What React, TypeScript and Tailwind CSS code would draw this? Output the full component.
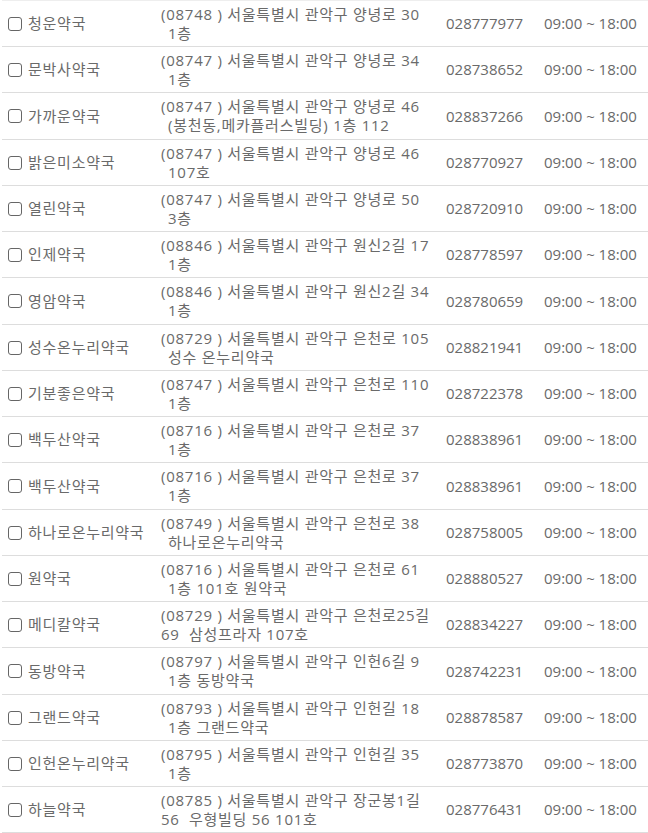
const ROWS: { name: string; addr: string; addr2: string; indent: boolean; tel: string }[] = [
  { name: "청운약국", addr: "(08748 ) 서울특별시 관악구 양녕로 30", addr2: "1층", indent: true, tel: "028777977" },
  { name: "문박사약국", addr: "(08747 ) 서울특별시 관악구 양녕로 34", addr2: "1층", indent: true, tel: "028738652" },
  { name: "가까운약국", addr: "(08747 ) 서울특별시 관악구 양녕로 46", addr2: "(봉천동,메카플러스빌딩) 1층 112", indent: true, tel: "028837266" },
  { name: "밝은미소약국", addr: "(08747 ) 서울특별시 관악구 양녕로 46", addr2: "107호", indent: true, tel: "028770927" },
  { name: "열린약국", addr: "(08747 ) 서울특별시 관악구 양녕로 50", addr2: "3층", indent: true, tel: "028720910" },
  { name: "인제약국", addr: "(08846 ) 서울특별시 관악구 원신2길 17", addr2: "1층", indent: true, tel: "028778597" },
  { name: "영암약국", addr: "(08846 ) 서울특별시 관악구 원신2길 34", addr2: "1층", indent: true, tel: "028780659" },
  { name: "성수온누리약국", addr: "(08729 ) 서울특별시 관악구 은천로 105", addr2: "성수 온누리약국", indent: true, tel: "028821941" },
  { name: "기분좋은약국", addr: "(08747 ) 서울특별시 관악구 은천로 110", addr2: "1층", indent: true, tel: "028722378" },
  { name: "백두산약국", addr: "(08716 ) 서울특별시 관악구 은천로 37", addr2: "1층", indent: true, tel: "028838961" },
  { name: "백두산약국", addr: "(08716 ) 서울특별시 관악구 은천로 37", addr2: "1층", indent: true, tel: "028838961" },
  { name: "하나로온누리약국", addr: "(08749 ) 서울특별시 관악구 은천로 38", addr2: "하나로온누리약국", indent: true, tel: "028758005" },
  { name: "원약국", addr: "(08716 ) 서울특별시 관악구 은천로 61", addr2: "1층 101호 원약국", indent: true, tel: "028880527" },
  { name: "메디칼약국", addr: "(08729 ) 서울특별시 관악구 은천로25길", addr2: "69  삼성프라자 107호", indent: false, tel: "028834227" },
  { name: "동방약국", addr: "(08797 ) 서울특별시 관악구 인헌6길 9", addr2: "1층 동방약국", indent: true, tel: "028742231" },
  { name: "그랜드약국", addr: "(08793 ) 서울특별시 관악구 인헌길 18", addr2: "1층 그랜드약국", indent: true, tel: "028878587" },
  { name: "인헌온누리약국", addr: "(08795 ) 서울특별시 관악구 인헌길 35", addr2: "1층", indent: true, tel: "028773870" },
  { name: "하늘약국", addr: "(08785 ) 서울특별시 관악구 장군봉1길", addr2: "56  우형빌딩 56 101호", indent: false, tel: "028776431" },
];

export default function App() {
  return (
    <div
      className="w-[648px] h-[833px] overflow-hidden bg-white text-[15px] text-[#6a6a6a]"
      style={{ fontFamily: '"Open Sans", "Noto Sans CJK KR", sans-serif' }}
    >
      <div className="ml-[2px] border-t border-[#eeeeee]">
        {ROWS.map((row, i) => (
          <div
            key={i}
            className={`flex items-center border-b border-[#dddddd] ${i % 4 === 2 ? "h-[47px]" : "h-[46px]"}`}
          >
            <label className="flex w-[159px] items-center pl-[6px]">
              <span className="mr-[6px] h-[14px] w-[14px] shrink-0 rounded-[3px] border border-[#666]" />
              <span className="whitespace-nowrap tracking-[0.75px]">{row.name}</span>
            </label>
            <div className="w-[285px] whitespace-pre leading-[19px] tracking-[0.75px]">
              <div>{row.addr}</div>
              <div className={row.indent ? "pl-[7px]" : ""}>{row.addr2}</div>
            </div>
            <div className="w-[98px]">{row.tel}</div>
            <div className="whitespace-nowrap">09:00 ~ 18:00</div>
          </div>
        ))}
      </div>
    </div>
  );
}
